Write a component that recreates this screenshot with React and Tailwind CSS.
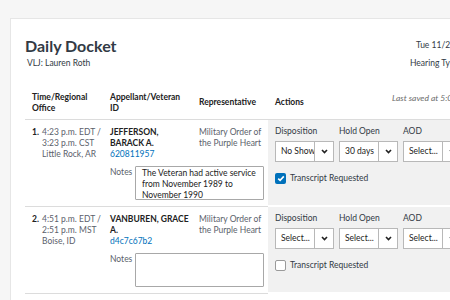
import React from "react";

const Chevron = () => (
  <svg width="7" height="5" viewBox="0 0 7 5" className="block">
    <polyline points="1,1 3.5,3.6 6,1" fill="none" stroke="#212121" strokeWidth="1.6" />
  </svg>
);

const Select = ({ value }) => (
  <div className="flex h-[21px] w-[59px] shrink-0 border border-[#b8b8b8] bg-white">
    <div className="flex flex-1 items-center overflow-hidden whitespace-nowrap pl-[5px] text-[#212121]">{value}</div>
    <div className="flex w-[19px] items-center justify-center border-l border-[#b8b8b8]">
      <Chevron />
    </div>
  </div>
);

const Checkbox = ({ checked }) =>
  checked ? (
    <div className="flex h-[11px] w-[11px] items-center justify-center rounded-[2px] bg-[#0071bb]">
      <svg width="8" height="7" viewBox="0 0 8 7">
        <polyline points="1.2,3.6 3.1,5.4 6.8,1.4" fill="none" stroke="#fff" strokeWidth="1.6" />
      </svg>
    </div>
  ) : (
    <div className="h-[11px] w-[11px] rounded-[2px] border border-[#9a9a9a] bg-white" />
  );

const Row = ({ n, time, local, ro, name, id, notes, selects, transcript }) => (
  <div className="grid grid-cols-[80px_90px_73px_260px]">
    <div className="col-span-3 grid grid-cols-[80px_90px_73px] border-b border-[#dcdcdc]">
      <div className="flex pl-[7px] pt-[7px]">
        <span className="w-[10px] font-bold text-[#212121]">{n}</span>
        <div className="text-[#5b616b]">
          <div>{time}</div>
          <div>{local}</div>
          <div>{ro}</div>
        </div>
      </div>
      <div className="pl-[5px] pt-[7px]">
        {name.map((l) => (
          <div key={l} className="font-bold text-[#212121]">{l}</div>
        ))}
        <div className="text-[#0071bb]">{id}</div>
      </div>
      <div className="pl-[4px] pt-[7px] text-[#5b616b]">
        <div>Military Order of</div>
        <div>the Purple Heart</div>
      </div>
      <div className="col-span-2 col-start-2 mt-[6px] flex items-start pb-[6px] pl-[5px]">
        <span className="w-[25px] pt-[1px] text-[#5b616b]">Notes</span>
        <div className="h-[34px] w-[129px] rounded-[1px] border border-[#a8a8a8] bg-white px-[6px] pt-[1px] text-[#212121]">
          {notes}
        </div>
      </div>
    </div>
    <div className="border-b-2 border-white bg-[#f1f1f1] pl-[7px] pt-[6px]">
      <div className="flex gap-[5px]">
        {selects.map(([label, value]) => (
          <div key={label} className="flex flex-col">
            <div className="mb-[4px] text-[#323a45]">{label}</div>
            <Select value={value} />
          </div>
        ))}
      </div>
      <div className="mt-[11px] flex items-center gap-[4px] text-[#323a45]">
        <Checkbox checked={transcript} />
        <span>Transcript Requested</span>
      </div>
    </div>
  </div>
);

export default function App() {
  return (
    <div className="h-[300px] w-[450px] overflow-hidden bg-[#f6f6f6] pl-[10px] pt-[18px] font-['Lato',sans-serif] text-[8.5px] leading-[11px]">
      <div className="h-[320px] w-[540px] border border-[#e6e6e6] bg-white pl-[14px] pt-[16px]">
        <div className="flex">
          <div className="w-[385px]">
            <h1 className="text-[16px] font-bold leading-[22px] text-[#323a45]">Daily Docket</h1>
            <div className="mt-[1px] pl-[2px] text-[#323a45]">VLJ: Lauren Roth</div>
          </div>
          <div className="pt-[5px] text-[#323a45]">
            <div className="pl-[6px]">Tue 11/28/2017</div>
            <div className="mt-[7px]">Hearing Type: Video</div>
          </div>
        </div>

        <div className="mt-[23px] grid grid-cols-[80px_90px_73px_260px] border-b border-[#dcdcdc] pb-[5px] font-bold text-[#212121]">
          <div className="pl-[7px]">
            <div>Time/Regional</div>
            <div>Office</div>
          </div>
          <div className="pl-[5px]">
            <div>Appellant/Veteran</div>
            <div>ID</div>
          </div>
          <div className="pl-[4px] pt-[5px]">Representative</div>
          <div className="flex items-start pl-[7px] pt-[5px]">
            <span className="w-[117px]">Actions</span>
            <span className="-mt-[4px] font-normal italic text-[#6b6b6b]">Last saved at 5:03 p.m.</span>
          </div>
        </div>

        <Row
          n="1."
          time="4:23 p.m. EDT /"
          local="3:23 p.m. CST"
          ro="Little Rock, AR"
          name={["JEFFERSON,", "BARACK A."]}
          id="620811957"
          notes="The Veteran had active service from November 1989 to November 1990"
          selects={[
            ["Disposition", "No Show"],
            ["Hold Open", "30 days"],
            ["AOD", "Select..."],
          ]}
          transcript
        />
        <Row
          n="2."
          time="4:51 p.m. EDT /"
          local="2:51 p.m. MST"
          ro="Boise, ID"
          name={["VANBUREN, GRACE", "A."]}
          id="d4c7c67b2"
          notes=""
          selects={[
            ["Disposition", "Select..."],
            ["Hold Open", "Select..."],
            ["AOD", "Select..."],
          ]}
          transcript={false}
        />
      </div>
    </div>
  );
}
